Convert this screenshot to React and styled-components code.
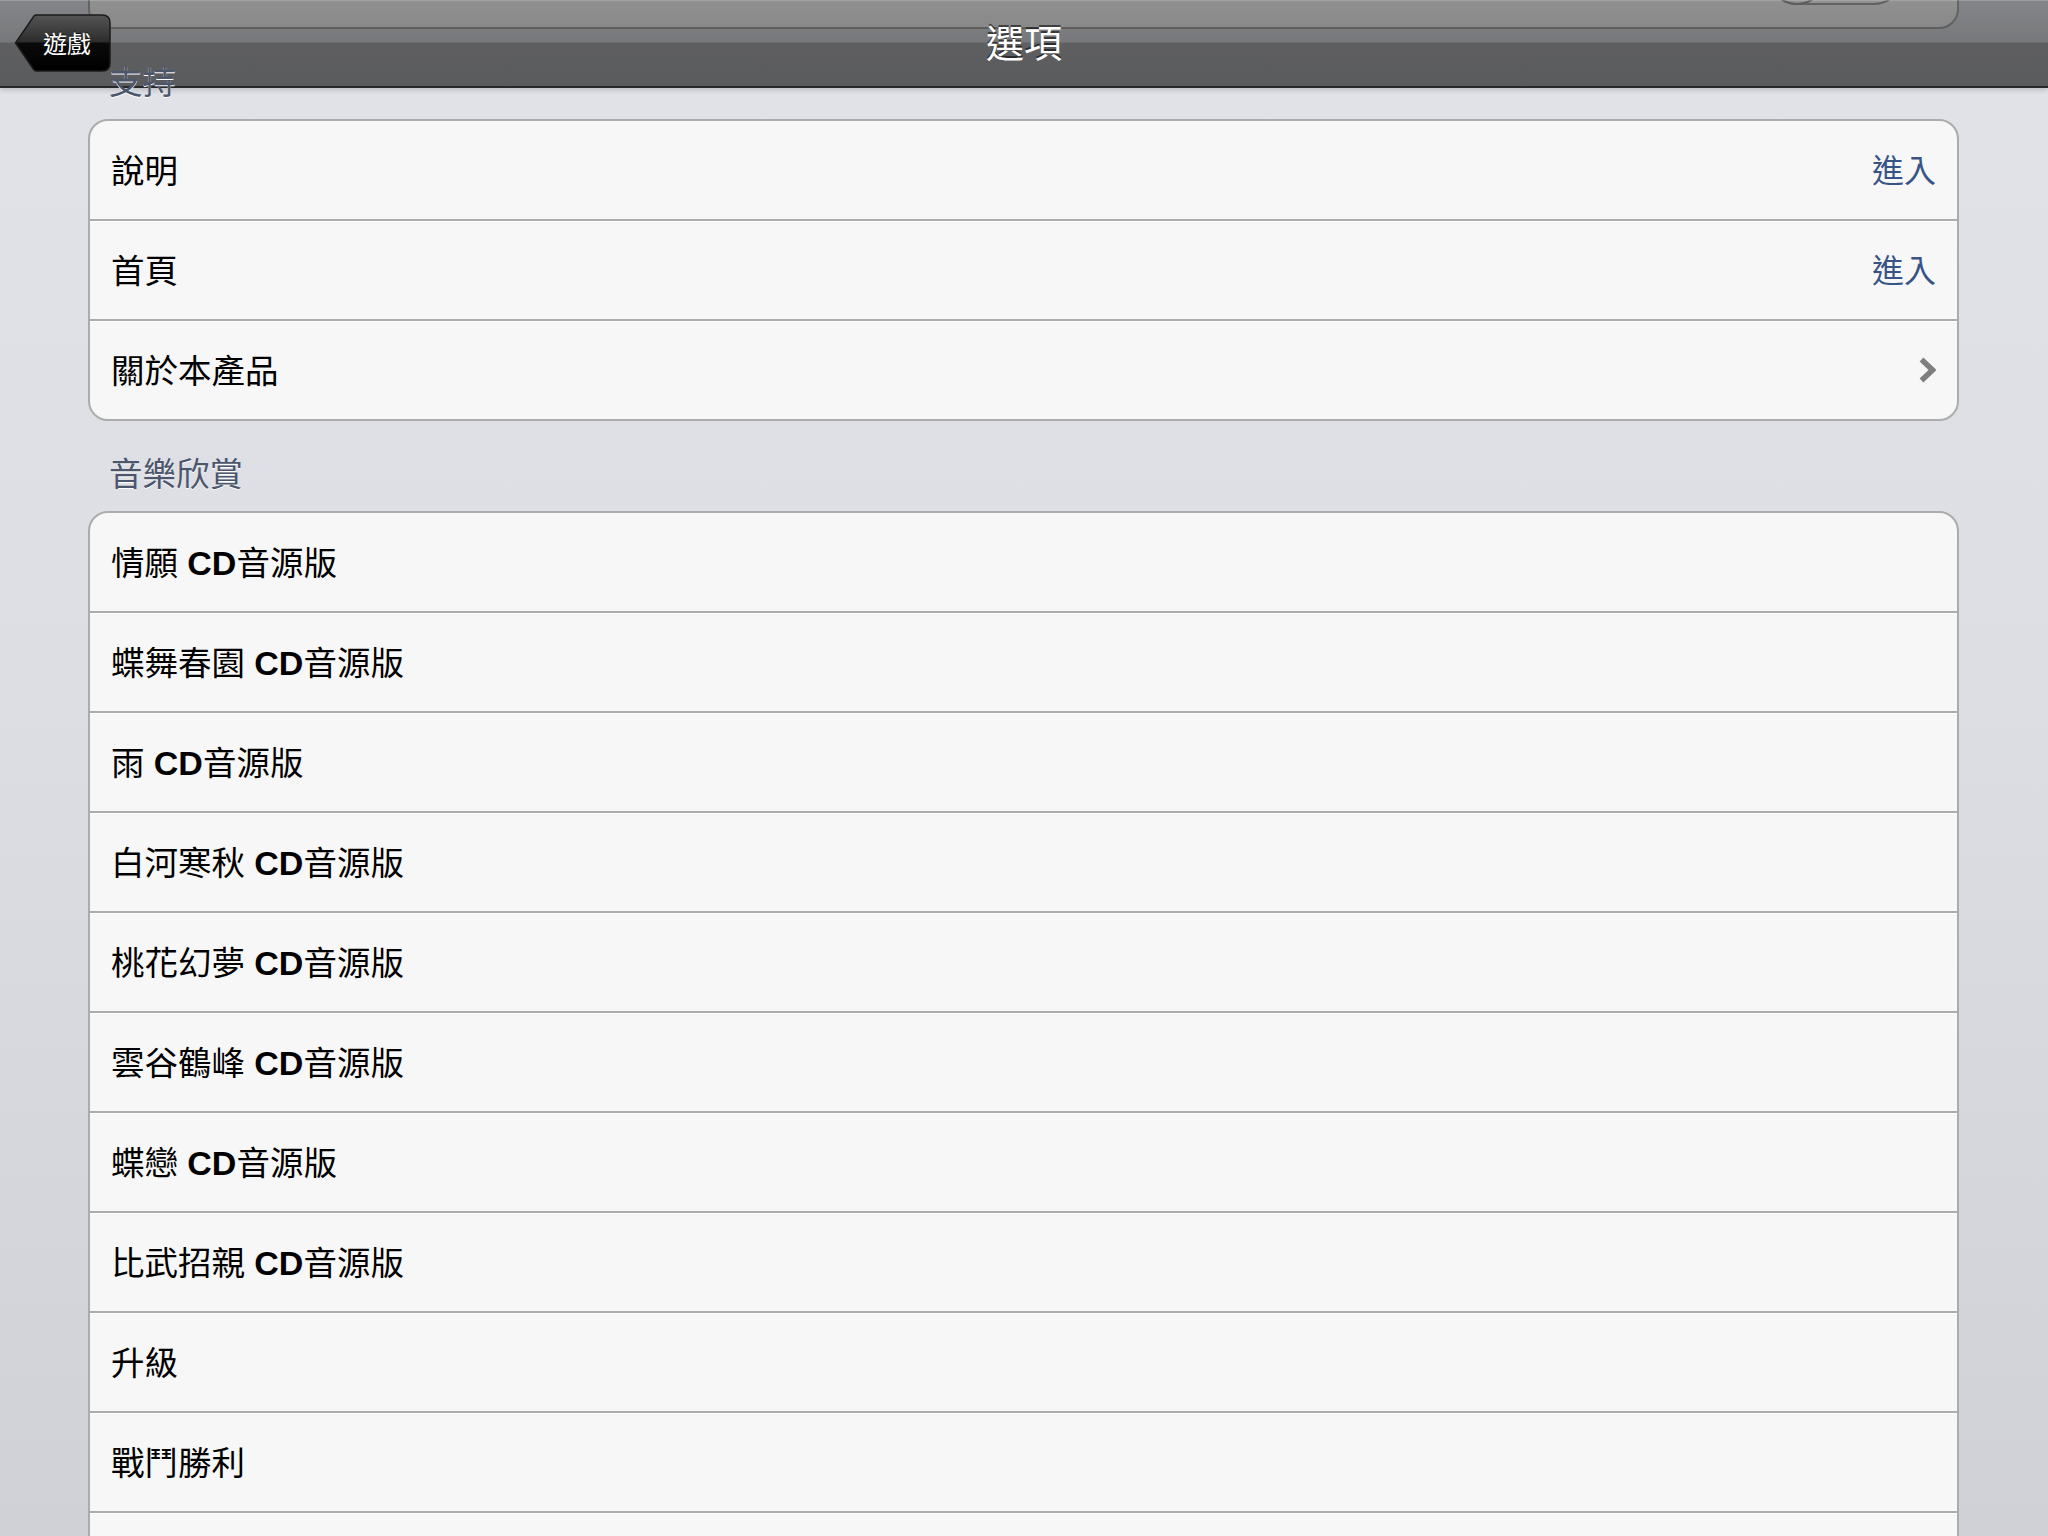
import styled, { createGlobalStyle } from 'styled-components';

const GlobalStyle = createGlobalStyle`
  html, body {
    margin: 0;
    padding: 0;
    overflow: hidden;
  }
  body {
    font-family: "Liberation Sans", "Noto Sans CJK TC", sans-serif;
  }
`;

const Page = styled.div`
  position: relative;
  width: 2048px;
  height: 1536px;
  overflow: hidden;
  background: linear-gradient(to bottom, #e1e3e8 0%, #dcdee3 45%, #d0d1d6 100%);
`;

// translucent bar laid over the scrolled table
const NavBar = styled.header`
  position: absolute;
  top: 0;
  left: 0;
  right: 0;
  z-index: 1;
  height: 86px;
  display: grid;
  grid-template-columns: 1fr auto 1fr;
  align-items: center;
  background: linear-gradient(
    to bottom,
    rgba(0, 0, 0, 0.41) 0%,
    rgba(0, 0, 0, 0.47) 49%,
    rgba(0, 0, 0, 0.58) 50%,
    rgba(0, 0, 0, 0.6) 100%
  );
  border-bottom: 2px solid rgba(25, 25, 25, 0.85);
  box-shadow: inset 0 1px 0 rgba(255, 255, 255, 0.18), 0 2px 5px rgba(0, 0, 0, 0.18);
`;

const Title = styled.h1`
  margin: 0;
  padding-bottom: 5px;
  font-size: 38px;
  font-weight: normal;
  color: #fff;
  text-shadow: 0 -2px 0 rgba(0, 0, 0, 0.55);
`;

const BackButton = styled.button`
  position: relative;
  justify-self: start;
  margin-left: 14px;
  width: 97px;
  height: 58px;
  padding: 0 0 2px 9px;
  border: 0;
  background: none;
  display: flex;
  align-items: center;
  justify-content: center;
  font-family: "Liberation Sans", "Noto Sans CJK TC", sans-serif;
  font-size: 24px;
  color: #fff;
  text-shadow: 0 -1px 0 rgba(0, 0, 0, 0.7);

  svg {
    position: absolute;
    inset: 0;
  }
  span {
    position: relative;
  }
`;

const Content = styled.main`
  margin-top: -73px;
  padding: 0 89px 0 88px;
  display: flex;
  flex-direction: column;
`;

const SectionHeader = styled.h2`
  position: relative;
  z-index: 2;
  margin: 0;
  padding: 34px 21px 16px;
  font-size: 33.5px;
  line-height: 40px;
  font-weight: normal;
  color: #4c566c;
  text-shadow: 0 1px 0 #fff;
`;

const Group = styled.section`
  background: #f7f7f7;
  border: 2px solid #acacac;
  border-radius: 20px;
  overflow: hidden;
`;

const Row = styled.div`
  height: 98px;
  box-sizing: border-box;
  display: flex;
  align-items: center;
  justify-content: space-between;
  padding: 0 21px 4px 21px;
  font-size: 33.5px;
  color: #000;

  & + & {
    height: 100px;
    border-top: 2px solid #acacac;
    box-shadow: inset 0 1px 0 #fff;
  }
`;

const Label = styled.span`
  white-space: pre;
`;

const Latin = styled.b`
  font-family: "Liberation Sans", sans-serif;
  font-size: 34px;
  font-weight: bold;
`;

const Detail = styled.span`
  font-size: 32px;
  color: #385487;
`;

const ChevronIcon = styled.svg`
  margin-top: 4px;
`;

const Switch = styled.span`
  position: relative;
  width: 135px;
  height: 58px;
  margin-right: 33px;
  box-sizing: border-box;
  border: 2px solid #a8a8a8;
  border-radius: 29px;
  background: linear-gradient(to bottom, #dedede, #fbfbfb);

  &::before {
    content: '';
    position: absolute;
    left: -2px;
    top: -2px;
    width: 58px;
    height: 58px;
    box-sizing: border-box;
    border: 2px solid #a0a0a0;
    border-radius: 50%;
    background: linear-gradient(to bottom, #d4d4d4, #fafafa);
  }
`;

function BackShape() {
  return (
    <svg width="97" height="58" viewBox="0 0 97 58">
      <defs>
        <linearGradient id="backFill" x1="0" y1="0" x2="0" y2="1">
          <stop offset="0" stopColor="#555" />
          <stop offset="0.48" stopColor="#2c2c2c" />
          <stop offset="0.5" stopColor="#0a0a0a" />
          <stop offset="1" stopColor="#000" />
        </linearGradient>
      </defs>
      <path
        d="M1.5 29 L20 2 Q21 1 22.5 1 L88 1 Q96 1 96 9 L96 49 Q96 57 88 57 L22.5 57 Q21 57 20 56 Z"
        fill="url(#backFill)"
        stroke="#1b1b1b"
        strokeWidth="1.5"
      />
    </svg>
  );
}

function Chevron() {
  return (
    <ChevronIcon width="17" height="26" viewBox="0 0 17 26">
      <polyline points="2.5,2.5 13.5,13 2.5,23.5" fill="none" stroke="#7f7f7f" strokeWidth="5.5" />
    </ChevronIcon>
  );
}

const support = [
  { label: '說明', detail: '進入' },
  { label: '首頁', detail: '進入' },
  { label: '關於本產品', more: true },
];

const music = [
  '情願 CD音源版',
  '蝶舞春園 CD音源版',
  '雨 CD音源版',
  '白河寒秋 CD音源版',
  '桃花幻夢 CD音源版',
  '雲谷鶴峰 CD音源版',
  '蝶戀 CD音源版',
  '比武招親 CD音源版',
  '升級',
  '戰鬥勝利',
  '戰鬥失敗',
];

function MusicLabel({ text }) {
  let parts = text.split('CD');
  if (parts.length < 2) return <Label>{text}</Label>;
  return (
    <Label>
      {parts[0]}
      <Latin>CD</Latin>
      {parts[1]}
    </Label>
  );
}

function App() {
  return (
    <>
      <GlobalStyle />
      <Page>
        <NavBar>
          <BackButton>
            <BackShape />
            <span>遊戲</span>
          </BackButton>
          <Title>選項</Title>
          <div />
        </NavBar>

        <Content>
          {/* 위로 스크롤된 이전 그룹 */}
          <Group>
            <Row>
              <Label>音效</Label>
              <Switch />
            </Row>
          </Group>

          <SectionHeader>支持</SectionHeader>
          <Group>
            {support.map((item, i) => (
              <Row key={i}>
                <Label>{item.label}</Label>
                {item.detail && <Detail>{item.detail}</Detail>}
                {item.more && <Chevron />}
              </Row>
            ))}
          </Group>

          <SectionHeader>音樂欣賞</SectionHeader>
          <Group>
            {music.map((text, i) => (
              <Row key={i}>
                <MusicLabel text={text} />
              </Row>
            ))}
          </Group>
        </Content>
      </Page>
    </>
  );
}

export default App;
